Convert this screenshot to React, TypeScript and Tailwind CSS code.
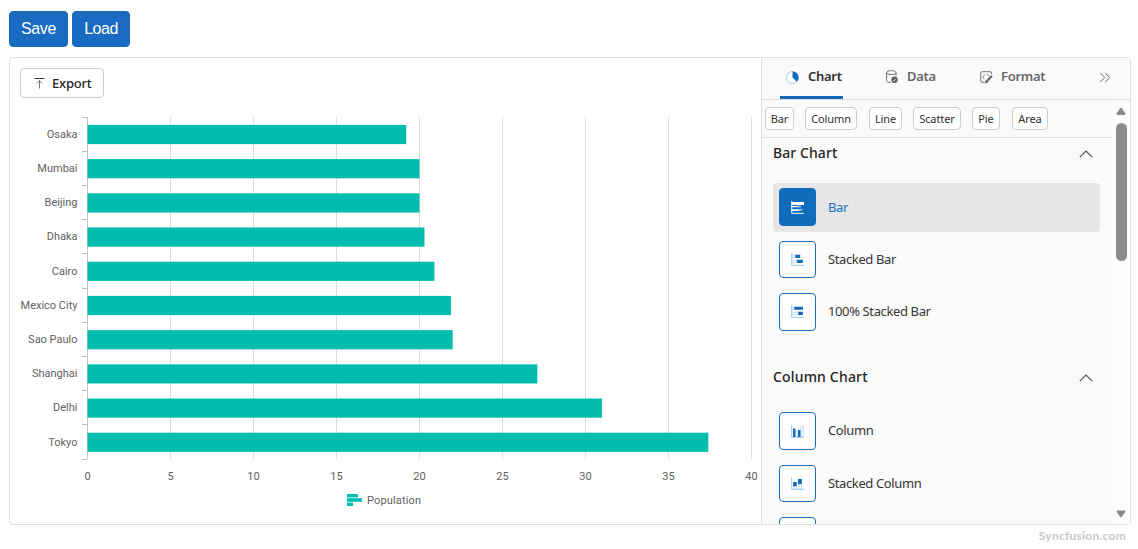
import React from "react";

const cities: [string, number][] = [
  ["Osaka", 19.2],
  ["Mumbai", 20],
  ["Beijing", 20],
  ["Dhaka", 20.3],
  ["Cairo", 20.9],
  ["Mexico City", 21.9],
  ["Sao Paulo", 22],
  ["Shanghai", 27.1],
  ["Delhi", 31],
  ["Tokyo", 37.4],
];
const ticks = [0, 5, 10, 15, 20, 25, 30, 35, 40];

const X0 = 77;
const UNIT = 16.6;
const TOP = 6;
const ROW = 34.2;

function PopulationChart() {
  const bottom = TOP + ROW * 10;
  return (
    <svg width="751" height="412" viewBox="0 0 751 412" className="block font-['Roboto',sans-serif] text-[11px]">
      {ticks.slice(1).map((t) => {
        const x = Math.round(X0 + t * UNIT) + 0.5;
        return <line key={t} x1={x} x2={x} y1={TOP} y2={bottom} stroke="#dcdcdc" />;
      })}
      <line x1={X0 + 0.5} x2={X0 + 0.5} y1={TOP} y2={bottom} stroke="#c6c6c6" />
      {Array.from({ length: 11 }, (_, i) => {
        const y = Math.round(TOP - 0.4 + i * ROW) + 0.5;
        return <line key={i} x1={X0 - 5} x2={X0} y1={y} y2={y} stroke="#bdbdbd" />;
      })}
      {cities.map(([name, value], i) => (
        <g key={name}>
          <rect x={X0 + 0.5} y={TOP + 7.9 + i * ROW} width={value * UNIT} height="19.2" fill="#00bdae" />
          <text x="67.5" y={TOP + 20.8 + i * ROW} textAnchor="end" fill="#616161">{name}</text>
        </g>
      ))}
      {ticks.map((t) => (
        <text key={t} x={X0 + 0.5 + t * UNIT} y="369" textAnchor="middle" fill="#616161">{t}</text>
      ))}
      <g fill="#00bdae">
        <rect x="337" y="383" width="11" height="3.4" />
        <rect x="337" y="387.2" width="15" height="3.6" />
        <rect x="337" y="391.6" width="6" height="3.4" />
      </g>
      <text x="357" y="393" fill="#616161" textLength="54">Population</text>
    </svg>
  );
}

type Kind = "bar" | "stackedBar" | "fullBar" | "column" | "stackedColumn" | "fullColumn";

function ChartGlyph({ kind }: { kind: Kind }) {
  const pale = kind === "bar" ? "#8fbde6" : "#b4d2ee";
  return (
    <svg width="13" height="13" viewBox="0 0 13 13" fill="none">
      <path d="M.7 0V12.3H13" stroke={kind === "bar" ? "#ffffff" : "#9fc5e8"} />
      {kind === "bar" && (
        <g>
          <path d="M1 1h12v3H1zM1 4.9h6v1.4H1zM1 8.2h7.5v1.8H1z" fill="#fff" />
          <path d="M7 4.5h3v2H7zM8.5 7.8h3v2h-3z" fill={pale} />
        </g>
      )}
      {kind === "stackedBar" && (
        <g>
          <path d="M1 2.2h3.5v2.5H1zM1 7.3h5v2.5H1z" stroke={pale} strokeWidth=".8" />
          <path d="M4.4 1.8h4.8v3.2H4.4zM6 6.8h5.8V10H6z" fill="#1468bd" />
        </g>
      )}
      {kind === "fullBar" && (
        <g>
          <path d="M1 2.2h2.5v2.5H1zM1 7.3h10.6v2.5H1z" stroke={pale} strokeWidth=".8" />
          <path d="M3.3 1.8h8.7v3H3.3zM7.2 6.8h4.6V10H7.2z" fill="#1468bd" />
        </g>
      )}
      {kind === "column" && (
        <g>
          <path d="M4.5 6.5h2v5.5h-2zM10 1h2.4v11H10z" stroke={pale} strokeWidth=".8" />
          <path d="M2 3.5h2.4V12H2zM7 5h2.5v7H7z" fill="#1468bd" />
        </g>
      )}
      {(kind === "stackedColumn" || kind === "fullColumn") && (
        <g>
          <path d="M2.6 9.3h2.8V12H2.6zM7.7 7.2h2.8V12H7.7z" stroke={pale} strokeWidth=".8" />
          <path d="M2.1 5h3.6v4.3H2.1zM7 2h3.9v5H7z" fill="#1468bd" />
        </g>
      )}
    </svg>
  );
}

function Chevron() {
  return (
    <svg width="14" height="8" viewBox="0 0 14 8" fill="none" stroke="#505050" strokeWidth="1.1">
      <path d="M0.8 7.2 7 1l6.2 6.2" />
    </svg>
  );
}

const groups: { title: string; tracking: string; items: { label?: string; kind: Kind; on?: boolean }[] }[] = [
  {
    title: "Bar Chart",
    tracking: "tracking-[0.08px]",
    items: [
      { label: "Bar", kind: "bar", on: true },
      { label: "Stacked Bar", kind: "stackedBar" },
      { label: "100% Stacked Bar", kind: "fullBar" },
    ],
  },
  {
    title: "Column Chart",
    tracking: "tracking-[0.17px]",
    items: [
      { label: "Column", kind: "column" },
      { label: "Stacked Column", kind: "stackedColumn" },
      { kind: "fullColumn" },
    ],
  },
];

const chips = [
  { label: "Bar", box: "w-[29px]" },
  { label: "Column", box: "w-[52px] ml-[11px]" },
  { label: "Line", box: "w-[33px] ml-[12px]" },
  { label: "Scatter", box: "w-[48px] ml-[11px]" },
  { label: "Pie", box: "w-[28px] ml-[11px]" },
  { label: "Area", box: "w-[36px] ml-[12px]" },
];

function Tabs() {
  return (
    <div className="flex h-[42px] shrink-0 border-b border-[#dedede] pl-[18px] text-[13px] font-semibold tracking-[-0.3px] text-[#686868]">
      <div className="flex w-[63px] items-center border-b-[3px] border-[#1468b8] pl-[6px] text-[#303030]">
        <svg width="13" height="13" viewBox="0 0 13 13" className="mr-[9px] shrink-0">
          <circle cx="6.5" cy="6.5" r="6" fill="#fff" stroke="#9abfe2" strokeWidth="0.8" />
          <path d="M6.5 0.5a6 6 0 0 1 4.2 10.3L6.5 6.5z" fill="#146bc2" />
        </svg>
        <span className="pb-px">Chart</span>
      </div>
      <div className="ml-[43px] flex w-[50px] items-center pb-[3px]">
        <svg width="12" height="14" viewBox="0 0 12 14" fill="none" stroke="#686868" strokeWidth=".9" className="mr-[9px] shrink-0">
          <ellipse cx="5.3" cy="2.6" rx="4.7" ry="2" />
          <path d="M.6 2.6v8c0 1.1 1.7 1.9 4 2M10 2.6v3.2" />
          <circle cx="8.5" cy="9.8" r="3.2" fill="#616161" stroke="none" />
          <path d="m7 9.9 1 1 2-2.2" stroke="#fafafa" strokeWidth=".8" />
        </svg>
        <span className="pb-px">Data</span>
      </div>
      <div className="ml-[44px] flex w-[66px] items-center pb-[3px]">
        <svg width="13" height="13" viewBox="0 0 13 13" fill="none" stroke="#686868" strokeWidth=".9" className="mr-[8px] shrink-0">
          <path d="M11.5 3V2q0-1.3-1.3-1.3H2Q.7.7.7 2v8q0 1.3 1.3 1.3h2M4.8 3.6 2.6 6l1.7 2.1M7 3.4l1.8 1.4" />
          <path d="m7 8.7 4-4.4 1.4 1.3-4 4.3z" fill="#616161" strokeWidth=".5" />
          <path d="M6.8 9.2c-1.5-.2-1.2 2-2.5 2.4 2.4.8 3.9 0 3.8-1.5z" fill="#616161" strokeWidth=".5" />
        </svg>
        <span className="pb-px">Format</span>
      </div>
      <div className="ml-[53px] flex items-center pb-[3px]">
        <svg width="12" height="11" viewBox="0 0 12 11" fill="none" stroke="#686868">
          <path d="m1.2.8 4.5 4.7-4.5 4.7M6.2.8l4.5 4.7-4.5 4.7" />
        </svg>
      </div>
    </div>
  );
}

export default function App() {
  return (
    <main className="flex h-[549px] w-[1138px] flex-col bg-white pl-[9px] pr-[7px] pt-[11px] font-['Noto_Sans',sans-serif]">
      <div className="flex gap-[4px] font-['Liberation_Sans',sans-serif] text-[16px] text-white">
        <button className="h-[36px] w-[59px] rounded-[4px] border border-[#1867bb] bg-[#196bc1] tracking-[-0.4px]">Save</button>
        <button className="h-[36px] w-[58px] rounded-[4px] border border-[#1867bb] bg-[#196bc1] tracking-[-0.5px]">Load</button>
      </div>

      <section className="mt-[10px] flex h-[468px] overflow-hidden rounded-[4px] border border-[#dedede]">
        <div className="w-[751px] shrink-0">
          <button className="ml-[10px] mt-[10px] flex h-[30px] w-[84px] items-center rounded-[4px] border border-[#cacaca] bg-white pl-[13px] text-[13px] font-medium text-[#242424]">
            <svg width="11" height="11" viewBox="0 0 11 11" fill="none" className="mr-[7px] shrink-0">
              <path d="M.5 .5h10" stroke="#303030" />
              <path d="M5.5 2.5v8M2.7 5.3l2.8-2.7 2.8 2.7" stroke="#777" />
            </svg>
            <span className="pt-px tracking-[-0.2px]">Export</span>
          </button>
          <div className="mt-[13px]">
            <PopulationChart />
          </div>
        </div>

        <aside className="flex min-w-0 flex-1 flex-col border-l border-[#dedede] bg-[#fafafa]">
          <Tabs />
          <div className="flex min-h-0 flex-1">
            <div className="flex w-[350px] shrink-0 flex-col overflow-hidden">
              <div className="flex h-[38px] shrink-0 items-center border-b border-[#e0e0e0] pl-[3px] text-[11px] tracking-[-0.1px] text-[#303030]">
                {chips.map((c) => (
                  <div key={c.label} className={`flex h-[23px] items-center justify-center rounded-[4px] border border-[#cccccc] bg-white pt-px ${c.box}`}>
                    {c.label}
                  </div>
                ))}
              </div>
              {groups.map((g) => (
                <div key={g.title} className="h-[223.7px] shrink-0 pl-[11px] pr-[12px]">
                  <div className="flex h-[45px] items-start justify-between pr-[7px]">
                    <h2 className={`mt-[5px] text-[14px] font-medium leading-[20px] text-[#242424] ${g.tracking}`}>{g.title}</h2>
                    <span className="mt-[12px]"><Chevron /></span>
                  </div>
                  <div className="flex flex-col gap-[3.2px]">
                    {g.items.map((it) => (
                      <div key={it.kind} className={`flex h-[49px] shrink-0 items-center rounded-[4px] pl-[6px] ${it.on ? "bg-[#e6e6e6] text-[#1b70c2]" : "text-[#363636]"}`}>
                        <div className={`mr-[12px] flex w-[37px] items-center justify-center rounded-[4px] border border-[#1a6dbb] ${it.on ? "mb-px h-[38px] bg-[#0f6cbd]" : "h-[37.6px] bg-white"}`}>
                          <ChartGlyph kind={it.kind} />
                        </div>
                        {it.label && <span className="text-[13px] tracking-[-0.38px]">{it.label}</span>}
                      </div>
                    ))}
                  </div>
                </div>
              ))}
            </div>
            <div className="flex flex-1 flex-col items-center bg-[#fcfcfc] pt-[7px]">
              <svg width="10" height="9" viewBox="0 0 10 9" fill="#8a8a8a"><path d="M4.2 1.2q.8-1 1.6 0L9.3 6.3q.5 1.4-.9 1.7H1.6Q.2 7.7.7 6.3z" /></svg>
              <div className="mt-[7px] h-[138px] w-[11px] rounded-full bg-[#8b8b8b]" />
              <div className="flex-1" />
              <svg width="10" height="8" viewBox="0 0 10 8" fill="#8a8a8a" className="mb-[6px]"><path d="M4.2 6.8q.8 1 1.6 0L9.3 2Q9.8.7 8.4.5H1.6Q.2.7.7 2z" /></svg>
            </div>
          </div>
        </aside>
      </section>
      <div className="mr-[5px] mt-[3px] text-right font-['Lato',sans-serif] text-[12px] font-bold leading-[16px] tracking-[0.25px] text-[#c9c9c9]">Syncfusion.com</div>
    </main>
  );
}
